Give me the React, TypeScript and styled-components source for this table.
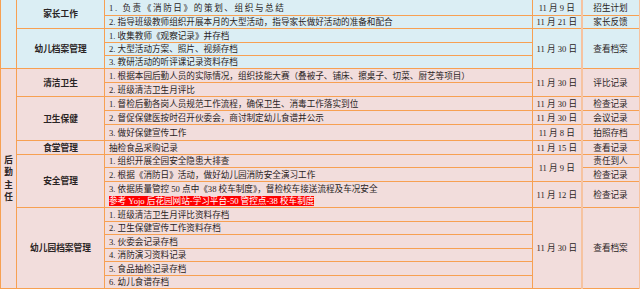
import React from 'react';
import styled, { createGlobalStyle } from 'styled-components';

const Global = createGlobalStyle`
  html, body {
    margin: 0;
    padding: 0;
    background: #ffffff;
    overflow: hidden;
  }
`

type Tone = 'blue' | 'pink';

const Sheet = styled.table`
  margin-top: -1px;
  width: 639px;
  table-layout: fixed;
  border-collapse: collapse;
  font-family: "Liberation Serif", "Noto Sans CJK SC", serif;
  font-size: 8.6px;
  color: #2a2424;
`

const Row = styled.tr<{ $h: number; $tone: Tone }>`
  height: ${p => p.$h}px;
  background: ${p => (p.$tone === 'blue' ? '#dbeef4' : '#f2dddc')};
`

const Cell = styled.td`
  border: 1px solid #f7a052;
  padding: 0;
  line-height: 12px;
  white-space: nowrap;
  overflow: hidden;
`

const Side = styled(Cell)`
  text-align: center;
  font-weight: 700;
`

const Stack = styled.div`
  display: flex;
  flex-direction: column;
  align-items: center;
  line-height: 12.5px;
`

const Topic = styled(Cell)`
  text-align: center;
  font-weight: 700;
  font-size: 8.7px;
`

const Task = styled(Cell)<{ $wide?: boolean }>`
  padding-left: 4px;
  letter-spacing: ${p => (p.$wide ? '1.6px' : '0')};
`

const Mark = styled.span`
  background: #ff0000;
  color: #ffffff;
`

const DateCell = styled(Cell)`
  text-align: center;
  border-right: 2px solid #f6c3a0;
`

const Result = styled(Cell)`
  text-align: center;
  border-right: 2px solid #f6c3a0;
`

const App: React.FC = () => {
  return (
    <>
      <Global />
      <Sheet>
        <colgroup>
          <col style={{ width: 16 }} />
          <col style={{ width: 88 }} />
          <col style={{ width: 428 }} />
          <col style={{ width: 49 }} />
          <col style={{ width: 58 }} />
        </colgroup>
        <tbody>
          <Row $h={16} $tone="blue">
            <Side rowSpan={5} />
            <Topic rowSpan={2}>家长工作</Topic>
            <Task $wide>1. 负责《消防日》的策划、组织与总结</Task>
            <DateCell>11 月 9 日</DateCell>
            <Result>招生计划</Result>
          </Row>
          <Row $h={13} $tone="blue">
            <Task>2. 指导班级教师组织开展本月的大型活动，指导家长做好活动的准备和配合</Task>
            <DateCell>11 月 21 日</DateCell>
            <Result>家长反馈</Result>
          </Row>
          <Row $h={14} $tone="blue">
            <Topic rowSpan={3}>幼儿档案管理</Topic>
            <Task>1. 收集教师《观察记录》并存档</Task>
            <DateCell rowSpan={3}>11 月 30 日</DateCell>
            <Result rowSpan={3}>查看档案</Result>
          </Row>
          <Row $h={13} $tone="blue">
            <Task>2. 大型活动方案、照片、视频存档</Task>
          </Row>
          <Row $h={13} $tone="blue">
            <Task>3. 教研活动的听评课记录资料存档</Task>
          </Row>

          <Row $h={14} $tone="pink">
            <Side rowSpan={15}>
              <Stack>
                <span>后</span>
                <span>勤</span>
                <span>主</span>
                <span>任</span>
              </Stack>
            </Side>
            <Topic rowSpan={2}>清洁卫生</Topic>
            <Task>1. 根据本园后勤人员的实际情况，组织技能大赛（叠被子、铺床、擦桌子、切菜、厨艺等项目）</Task>
            <DateCell rowSpan={2}>11 月 30 日</DateCell>
            <Result rowSpan={2}>评比记录</Result>
          </Row>
          <Row $h={14} $tone="pink">
            <Task>2. 班级清洁卫生月评比</Task>
          </Row>

          <Row $h={14} $tone="pink">
            <Topic rowSpan={3}>卫生保健</Topic>
            <Task>1. 督检后勤各岗人员规范工作流程，确保卫生、消毒工作落实到位</Task>
            <DateCell>11 月 30 日</DateCell>
            <Result>检查记录</Result>
          </Row>
          <Row $h={14} $tone="pink">
            <Task>2. 督促保健医按时召开伙委会，商讨制定幼儿食谱并公示</Task>
            <DateCell>11 月 30 日</DateCell>
            <Result>会议记录</Result>
          </Row>
          <Row $h={16} $tone="pink">
            <Task>3. 做好保健宣传工作</Task>
            <DateCell>11 月 8 日</DateCell>
            <Result>拍照存档</Result>
          </Row>

          <Row $h={14} $tone="pink">
            <Topic>食堂管理</Topic>
            <Task>抽检食品采购记录</Task>
            <DateCell>11 月 15 日</DateCell>
            <Result>查看记录</Result>
          </Row>

          <Row $h={13} $tone="pink">
            <Topic rowSpan={3}>安全管理</Topic>
            <Task>1. 组织开展全园安全隐患大排查</Task>
            <DateCell rowSpan={2}>11 月 9 日</DateCell>
            <Result>责任到人</Result>
          </Row>
          <Row $h={14} $tone="pink">
            <Task>2. 根据《消防日》活动，做好幼儿园消防安全演习工作</Task>
            <Result>检查记录</Result>
          </Row>
          <Row $h={26} $tone="pink">
            <Task>
              3. 依据质量管控 50 点中《38 校车制度》，督检校车接送流程及车况安全
              <br />
              <Mark>参考 Yojo 后花园网站-学习平台-50 管控点-38 校车制度</Mark>
            </Task>
            <DateCell>11 月 12 日</DateCell>
            <Result>检查记录</Result>
          </Row>

          <Row $h={14} $tone="pink">
            <Topic rowSpan={6}>幼儿园档案管理</Topic>
            <Task>1. 班级清洁卫生月评比资料存档</Task>
            <DateCell rowSpan={6}>11 月 30 日</DateCell>
            <Result rowSpan={6}>查看档案</Result>
          </Row>
          <Row $h={13} $tone="pink">
            <Task>2. 卫生保健宣传工作资料存档</Task>
          </Row>
          <Row $h={14} $tone="pink">
            <Task>3. 伙委会记录存档</Task>
          </Row>
          <Row $h={13} $tone="pink">
            <Task>4. 消防演习资料记录</Task>
          </Row>
          <Row $h={14} $tone="pink">
            <Task>5. 食品抽检记录存档</Task>
          </Row>
          <Row $h={13} $tone="pink">
            <Task>6. 幼儿食谱存档</Task>
          </Row>
        </tbody>
      </Sheet>
    </>
  );
}

export default App;
